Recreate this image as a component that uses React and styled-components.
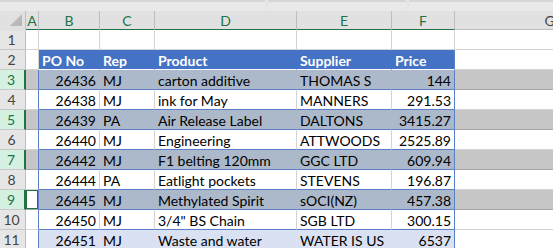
import React from "react";
import styled, { createGlobalStyle, css } from "styled-components";

const Global = createGlobalStyle`
  html, body { margin: 0; padding: 0; background: #ffffff; }
  body { font-family: Lato, "Liberation Sans", sans-serif; overflow: hidden; }
`;

const COLS = "26px 13px 61px 55px 142px 95px 63px 190px";

const Sheet = styled.div`
  width: 553px;
  height: 248px;
  overflow: hidden;
  background: #ffffff;
`;

const TopStrip = styled.div`
  height: 11px;
  background: #e6e6e6;
  display: grid;
  grid-template-columns: 265px 138px 1fr;
  gap: 3px;
  box-sizing: border-box;
`;

const StripBox = styled.div`
  border-top: 2px solid #d6d6d6;
  background: #e9e9e9;
`;

const Grid = styled.div`
  width: 645px;
`;

const Row = styled.div`
  display: grid;
  grid-template-columns: ${COLS};
  height: ${(p) => p.$h || 20}px;
`;

const Corner = styled.div`
  background: #e1e1e1;
  border-right: 1px solid #bdbdbd;
  border-bottom: 2px solid #e1e1e1;
  position: relative;
  overflow: hidden;
  &::after {
    content: "";
    position: absolute;
    right: 3px;
    bottom: 3px;
    width: 0;
    height: 0;
    border-left: 12px solid transparent;
    border-bottom: 12px solid #b9b9b9;
  }
`;

const ColHead = styled.div`
  background: #e1e1e1;
  border-right: 1px solid #bdbdbd;
  border-bottom: 2px solid ${(p) => (p.$sel ? "#217346" : "#bdbdbd")};
  color: ${(p) => (p.$sel ? "#217346" : "#444444")};
  font-size: 14px;
  display: flex;
  align-items: center;
  justify-content: center;
  box-sizing: border-box;
  padding-top: 1px;
`;

const RowHead = styled.div`
  box-sizing: border-box;
  background: ${(p) => (p.$sel ? "#d3f0e0" : "#e6e6e6")};
  color: ${(p) => (p.$sel ? "#217346" : "#444444")};
  border-bottom: 1px solid #c8c8c8;
  border-right: ${(p) => (p.$sel ? "2px solid #217346" : "1px solid #bdbdbd")};
  font-size: 14px;
  display: flex;
  align-items: center;
  justify-content: center;
  padding-right: 2px;
`;

const Cell = styled.div`
  box-sizing: border-box;
  font-size: 14px;
  color: #000000;
  display: flex;
  align-items: center;
  white-space: nowrap;
  overflow: hidden;
  padding: 2px 3px 0 3px;
  justify-content: ${(p) => (p.$right ? "flex-end" : "flex-start")};
  background: #ffffff;
  border-right: 1px solid #d4d4d4;
  border-bottom: 1px solid #d4d4d4;
  ${(p) =>
    p.$sel &&
    css`
      background: #c6c6c6;
      border-right-color: #c6c6c6;
      border-bottom-color: #a6a6a6;
    `}
  ${(p) =>
    p.$active &&
    css`
      background: #ffffff;
      box-shadow: inset 0 0 0 1px #217346;
    `}
  ${(p) =>
    p.$th &&
    css`
      background: #4472c4;
      color: #ffffff;
      font-weight: 700;
      border-right-color: #4472c4;
      border-bottom-color: #ffffff;
    `}
  ${(p) =>
    p.$band &&
    css`
      background: ${p.$sel ? "#acb9ca" : p.$odd ? "#d9e1f2" : "#ffffff"};
      border-right-color: ${p.$odd ? (p.$sel ? "#acb9ca" : "#d9e1f2") : "#d4d4d4"};
      border-bottom-color: #5b7fc7;
    `}
  ${(p) =>
    p.$edgeR &&
    css`
      border-right-color: #5b7fc7;
    `}
`;

const ACell = styled(Cell)`
  border-right-color: #5b7fc7;
  ${(p) => p.$top && css`border-right-color: #d4d4d4;`}
`;

const data = [
  ["26436", "MJ", "carton additive", "THOMAS S", "144"],
  ["26438", "MJ", "ink for May", "MANNERS", "291.53"],
  ["26439", "PA", "Air Release Label", "DALTONS", "3415.27"],
  ["26440", "MJ", "Engineering", "ATTWOODS", "2525.89"],
  ["26442", "MJ", "F1 belting 120mm", "GGC LTD", "609.94"],
  ["26444", "PA", "Eatlight pockets", "STEVENS", "196.87"],
  ["26445", "MJ", "Methylated Spirit", "sOCI(NZ)", "457.38"],
  ["26450", "MJ", "3/4\" BS Chain", "SGB LTD", "300.15"],
  ["26451", "MJ", "Waste and water", "WATER IS US", "6537"],
];

export default function App() {
  const letters = ["A", "B", "C", "D", "E", "F", "G"];
  return (
    <Sheet>
      <Global />
      <TopStrip>
        <StripBox />
        <StripBox />
        <StripBox />
      </TopStrip>
      <Grid>
        <Row $h={19}>
          <Corner />
          {letters.map((l) => (
            <ColHead key={l} $sel={l !== "G"}>
              {l}
            </ColHead>
          ))}
        </Row>
        <Row>
          <RowHead>1</RowHead>
          <ACell $top />
          <Cell />
          <Cell />
          <Cell />
          <Cell />
          <Cell />
          <Cell />
        </Row>
        <Row>
          <RowHead>2</RowHead>
          <ACell $top />
          <Cell $th>PO No</Cell>
          <Cell $th>Rep</Cell>
          <Cell $th>Product</Cell>
          <Cell $th>Supplier</Cell>
          <Cell $th $edgeR>Price</Cell>
          <Cell />
        </Row>
        {data.map((d, i) => {
          const n = i + 3;
          const odd = n % 2 === 1;
          const sel = odd && n <= 9;
          return (
            <Row key={n}>
              <RowHead $sel={sel}>{n}</RowHead>
              <ACell $sel={sel} $active={n === 9} />
              <Cell $band $odd={odd} $sel={sel} $right>
                {d[0]}
              </Cell>
              <Cell $band $odd={odd} $sel={sel}>
                {d[1]}
              </Cell>
              <Cell $band $odd={odd} $sel={sel}>
                {d[2]}
              </Cell>
              <Cell $band $odd={odd} $sel={sel}>
                {d[3]}
              </Cell>
              <Cell $band $odd={odd} $sel={sel} $right $edgeR>
                {d[4]}
              </Cell>
              <Cell $sel={sel} />
            </Row>
          );
        })}
      </Grid>
    </Sheet>
  );
}
